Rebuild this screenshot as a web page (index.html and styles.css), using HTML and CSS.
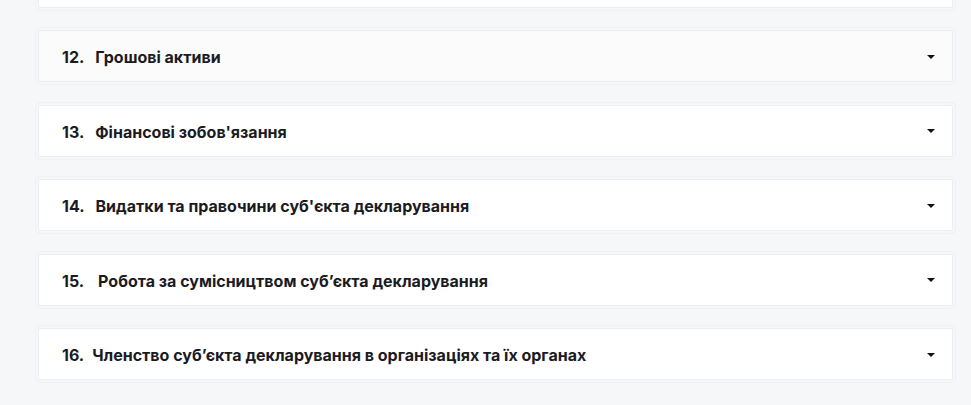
FILE: index.html
```html
<!DOCTYPE html>
<html lang="uk">
<head>
<meta charset="utf-8">
<title>Декларація</title>
<link rel="stylesheet" href="styles.css">
</head>
<body>
<div class="list">
  <div class="item"><div class="card"><span class="title"></span></div></div>
  <div class="item"><div class="card card--active"><span class="title"><span class="num">12.</span>Грошові активи</span><span class="caret"></span></div></div>
  <div class="item"><div class="card"><span class="title"><span class="num">13.</span>Фінансові зобов'язання</span><span class="caret"></span></div></div>
  <div class="item"><div class="card"><span class="title"><span class="num">14.</span>Видатки та правочини суб'єкта декларування</span><span class="caret"></span></div></div>
  <div class="item"><div class="card"><span class="title"><span class="num num--wide">15.</span>Робота за сумісництвом суб’єкта декларування</span><span class="caret"></span></div></div>
  <div class="item"><div class="card"><span class="title"><span class="num num--narrow">16.</span>Членство суб’єкта декларування в організаціях та їх органах</span><span class="caret"></span></div></div>
</div>
</body>
</html>
```
FILE: styles.css
```css
html, body {
  margin: 0;
  padding: 0;
  background: #f6f7f9;
  height: 100%;
  overflow: hidden;
}
body {
  font-family: Inter, "Noto Sans", "Liberation Sans", sans-serif;
  color: #1b1b1f;
}
.list {
  display: flex;
  flex-direction: column;
  gap: 22.5px;
  margin: -44.5px 18px 0 38px;
}
.card {
  box-sizing: border-box;
  height: 52px;
  background: #ffffff;
  border: 1px solid #eceef1;
  border-radius: 2px;
  outline: 1px solid #f0f1f4;
  outline-offset: 2px;
  display: flex;
  align-items: center;
  justify-content: space-between;
  padding: 0 17px 0 23px;
}
.card--active {
  background: #fbfbfb;
}
.title {
  font-size: 16px;
  font-weight: 700;
  letter-spacing: 0;
  line-height: 20px;
  padding-top: 2px;
}
.num {
  display: inline-block;
  margin-right: 11px;
}
.num--wide { margin-right: 14px; }
.num--narrow { margin-right: 8px; }
.caret {
  width: 0;
  height: 0;
  border-left: 4px solid transparent;
  border-right: 4px solid transparent;
  border-top: 4px solid #111;
  margin-top: 1px;
}
```
